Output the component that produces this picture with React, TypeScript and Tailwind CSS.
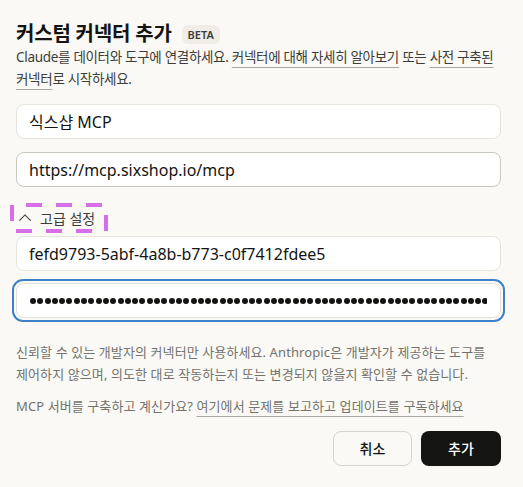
import React from "react";

const font = { fontFamily: '"Noto Sans", "Noto Sans CJK KR", sans-serif' };

export default function App() {
  const dots = Array.from({ length: 66 });
  return (
    <div className="w-[523px] h-[487px] bg-[#faf9f5] text-[#141413] overflow-hidden break-keep" style={font}>
      <div className="pl-4 pr-[22px] pt-[22px]">
        <div className="flex items-center gap-2.5">
          <h1 className="text-[20px] font-semibold leading-[24px] tracking-[-0.2px]">커스텀 커넥터 추가</h1>
          <span className="rounded-md bg-[#efede6] px-1.5 py-[3px] text-[11px] font-semibold leading-[13px] text-[#3d3d3a]">BETA</span>
        </div>
        <p className="text-[13.5px] leading-[22px] tracking-[-0.3px] text-[#3d3d3a]">
          Claude를 데이터와 도구에 연결하세요.{" "}
          <span className="underline decoration-[#a8a69e] underline-offset-[5px]">커넥터에 대해 자세히 알아보기</span> 또는{" "}
          <span className="underline decoration-[#a8a69e] underline-offset-[5px]">사전 구축된 커넥터</span>로 시작하세요.
        </p>

        <div className="mt-[14px] flex flex-col gap-[13px]">
          <div className="flex h-[35px] items-center rounded-lg border border-[#e6e4dd] bg-white px-3 text-[16px]">식스샵 MCP</div>
          <div className="flex h-[35px] items-center rounded-lg border border-[#c8c6bf] bg-white px-3 text-[16px]">https://mcp.sixshop.io/mcp</div>
        </div>

        <div className="relative mt-[16px] -ml-[6px] flex h-[30px] w-[98px] items-center pl-[8px] text-[14px] text-[#3d3d3a]">
          <svg className="pointer-events-none absolute inset-0" width="98" height="30" viewBox="0 0 98 30" fill="none">
            <rect x="2" y="2" width="94" height="26" stroke="#d66ee8" strokeWidth="4" strokeDasharray="16 14" strokeDashoffset="16" />
          </svg>
          <svg width="14" height="14" viewBox="0 0 16 16" fill="none" stroke="#3d3d3a" strokeWidth="1.3" className="mr-[8px]">
            <path d="M1.5 11 L8 4.5 L14.5 11" />
          </svg>
          고급 설정
        </div>

        <div className="mt-[3px] flex flex-col gap-[8px]">
          <div className="flex h-[35px] items-center rounded-lg border border-[#e6e4dd] bg-white px-3 text-[16px]">fefd9793-5abf-4a8b-b773-c0f7412fdee5</div>
          <div className="-mx-[4px] rounded-[11px] border-2 border-[#3d82c8] p-[2px]">
            <div className="flex h-[35px] items-center rounded-lg border border-[#e2e0d9] bg-white pl-[13px] pr-[13px]">
              <div className="flex flex-1 items-center gap-[1.3px] overflow-hidden">
                {dots.map((_, i) => (
                  <span key={i} className="block h-[6px] w-[6px] shrink-0 rounded-full bg-[#141413]" />
                ))}
              </div>
            </div>
          </div>
        </div>

        <p className="mt-[19px] text-[13px] leading-[22px] tracking-[0.1px] text-[#73726c]">
          신뢰할 수 있는 개발자의 커넥터만 사용하세요. Anthropic은 개발자가 제공하는 도구를 제어하지 않으며, 의도한 대로 작동하는지 또는 변경되지 않을지 확인할 수 없습니다.
        </p>
        <p className="mt-[10px] text-[13px] leading-[22px] tracking-[0.1px] text-[#73726c]">
          MCP 서버를 구축하고 계신가요?{" "}
          <span className="underline decoration-[#a8a69e] underline-offset-[5px]">여기에서 문제를 보고하고 업데이트를 구독하세요</span>
        </p>

        <div className="mt-[14px] flex justify-end gap-[9px]">
          <button className="h-[35px] w-[79px] rounded-lg border border-[#d6d4cc] bg-[#faf9f5] text-[14px] font-medium text-[#141413]">취소</button>
          <button className="h-[35px] w-[80px] rounded-lg bg-[#141413] text-[14px] font-medium text-white">추가</button>
        </div>
      </div>
    </div>
  );
}
